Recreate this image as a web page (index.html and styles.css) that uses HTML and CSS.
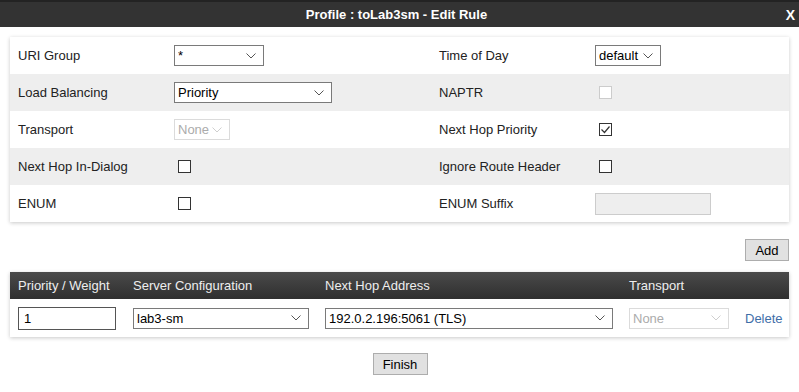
FILE: index.html
```html
<!DOCTYPE html>
<html lang="en">
<head>
<meta charset="UTF-8">
<title>Profile : toLab3sm - Edit Rule</title>
<link rel="stylesheet" href="styles.css">
</head>
<body>
<div class="dialog">
  <div class="titlebar">
    <span class="title">Profile : toLab3sm - Edit Rule</span>
    <span class="close">X</span>
  </div>

  <div class="content">
    <div class="card form">
      <div class="row">
        <span>URI Group</span>
        <select class="w-uri"><option>*</option></select>
        <span>Time of Day</span>
        <select class="w-tod"><option>default</option></select>
      </div>
      <div class="row alt">
        <span>Load Balancing</span>
        <select class="w-lb"><option>Priority</option></select>
        <span>NAPTR</span>
        <input type="checkbox" disabled>
      </div>
      <div class="row">
        <span>Transport</span>
        <select class="w-tr" disabled><option>None</option></select>
        <span>Next Hop Priority</span>
        <input type="checkbox" checked>
      </div>
      <div class="row alt">
        <span>Next Hop In-Dialog</span>
        <input type="checkbox">
        <span>Ignore Route Header</span>
        <input type="checkbox">
      </div>
      <div class="row">
        <span>ENUM</span>
        <input type="checkbox">
        <span>ENUM Suffix</span>
        <input type="text" class="suffix" disabled>
      </div>
    </div>

    <div class="actions"><button class="btn add">Add</button></div>

    <div class="card hops">
      <div class="hops-head">
        <span>Priority / Weight</span>
        <span>Server Configuration</span>
        <span>Next Hop Address</span>
        <span>Transport</span>
        <span></span>
      </div>
      <div class="hops-row">
        <input type="text" class="prio" value="1">
        <select class="w-srv"><option>lab3-sm</option></select>
        <select class="w-addr"><option>192.0.2.196:5061 (TLS)</option></select>
        <select class="w-htr" disabled><option>None</option></select>
        <a href="#" class="del">Delete</a>
      </div>
    </div>

    <div class="finish"><button class="btn">Finish</button></div>
  </div>
</div>
</body>
</html>
```

FILE: styles.css
```css
body{margin:0;font-family:"Liberation Sans",Arial,Helvetica,sans-serif;font-size:13px;color:#222;background:#fff}
.dialog{width:799px;height:392px;background:#fff}

.titlebar{height:25px;border-top:2px solid #232323;background:#333;color:#fff;font-weight:700;
  display:flex;align-items:center;justify-content:center;position:relative}
.title{margin-left:-6px}
.close{position:absolute;right:4px;top:5px;font-size:14px}

.content{padding:10px 10px 0}
.card{background:#fff;box-shadow:0 1px 4px rgba(0,0,0,.22)}

/* -------- form rows -------- */
.row{height:37px;display:grid;grid-template-columns:156px 265px 156px 1fr;align-items:center;padding-left:8px}
.row.alt{background:#eee}

select{appearance:none;-webkit-appearance:none;height:21px;padding:0 0 0 3px;font:13px "Liberation Sans",Arial,sans-serif;color:#000;
  border:1px solid #7a7a7a;border-radius:0;background:#fff url("data:image/svg+xml,%3Csvg xmlns='http://www.w3.org/2000/svg' width='10' height='6'%3E%3Cpath d='M.5.5l4.5 4.5 4.5-4.5' fill='none' stroke='%23555'/%3E%3C/svg%3E") no-repeat right 7px center}
select:disabled{border-color:#ccc;color:#888;background-image:url("data:image/svg+xml,%3Csvg xmlns='http://www.w3.org/2000/svg' width='10' height='6'%3E%3Cpath d='M.5.5l4.5 4.5 4.5-4.5' fill='none' stroke='%23bbb'/%3E%3C/svg%3E")}
.w-uri{width:90px}
.w-tod{width:66px}
.w-lb{width:158px}
.w-tr{width:56px}

input[type=checkbox]{appearance:none;-webkit-appearance:none;width:13px;height:13px;margin:0 0 0 4px;border:1px solid #333;background:#fff;border-radius:0}
input[type=checkbox]:disabled{border-color:#ccc}
input[type=checkbox]:checked{background:#fff url("data:image/svg+xml,%3Csvg xmlns='http://www.w3.org/2000/svg' width='11' height='11'%3E%3Cpath d='M1.5 5.5l3 3 5-6' fill='none' stroke='%23333' stroke-width='1.2'/%3E%3C/svg%3E") no-repeat center}

.suffix{width:116px;height:22px;box-sizing:border-box;margin:0;border:1px solid #ccc;background:#eee}

/* -------- buttons -------- */
.actions{display:flex;justify-content:flex-end;margin:17px 0 11px}
.btn{height:22px;padding:0 7px;font:13px "Liberation Sans",Arial,sans-serif;color:#000;background:#e1e1e1;border:1px solid #adadad;border-radius:0}
.btn.add{width:44px}
.finish{display:flex;justify-content:center;margin-top:16px}
.finish .btn{width:55px;margin-left:1px}

/* -------- next hop table -------- */
.hops-head,.hops-row{display:grid;grid-template-columns:115px 192px 304px 116px 1fr;align-items:center;padding-left:8px}
.hops-head{height:27px;background:linear-gradient(#4a4a4a,#2f2f2f);color:#eee}
.hops-row{height:38px}
.prio{width:98px;height:23px;box-sizing:border-box;margin:0;padding:0 0 0 5px;border:1px solid #555;font:13px "Liberation Sans",Arial,sans-serif;color:#000}
.w-srv{width:176px}
.w-addr{width:288px}
.w-htr{width:100px}
.del{color:#3f6ea8;text-decoration:none}
```
